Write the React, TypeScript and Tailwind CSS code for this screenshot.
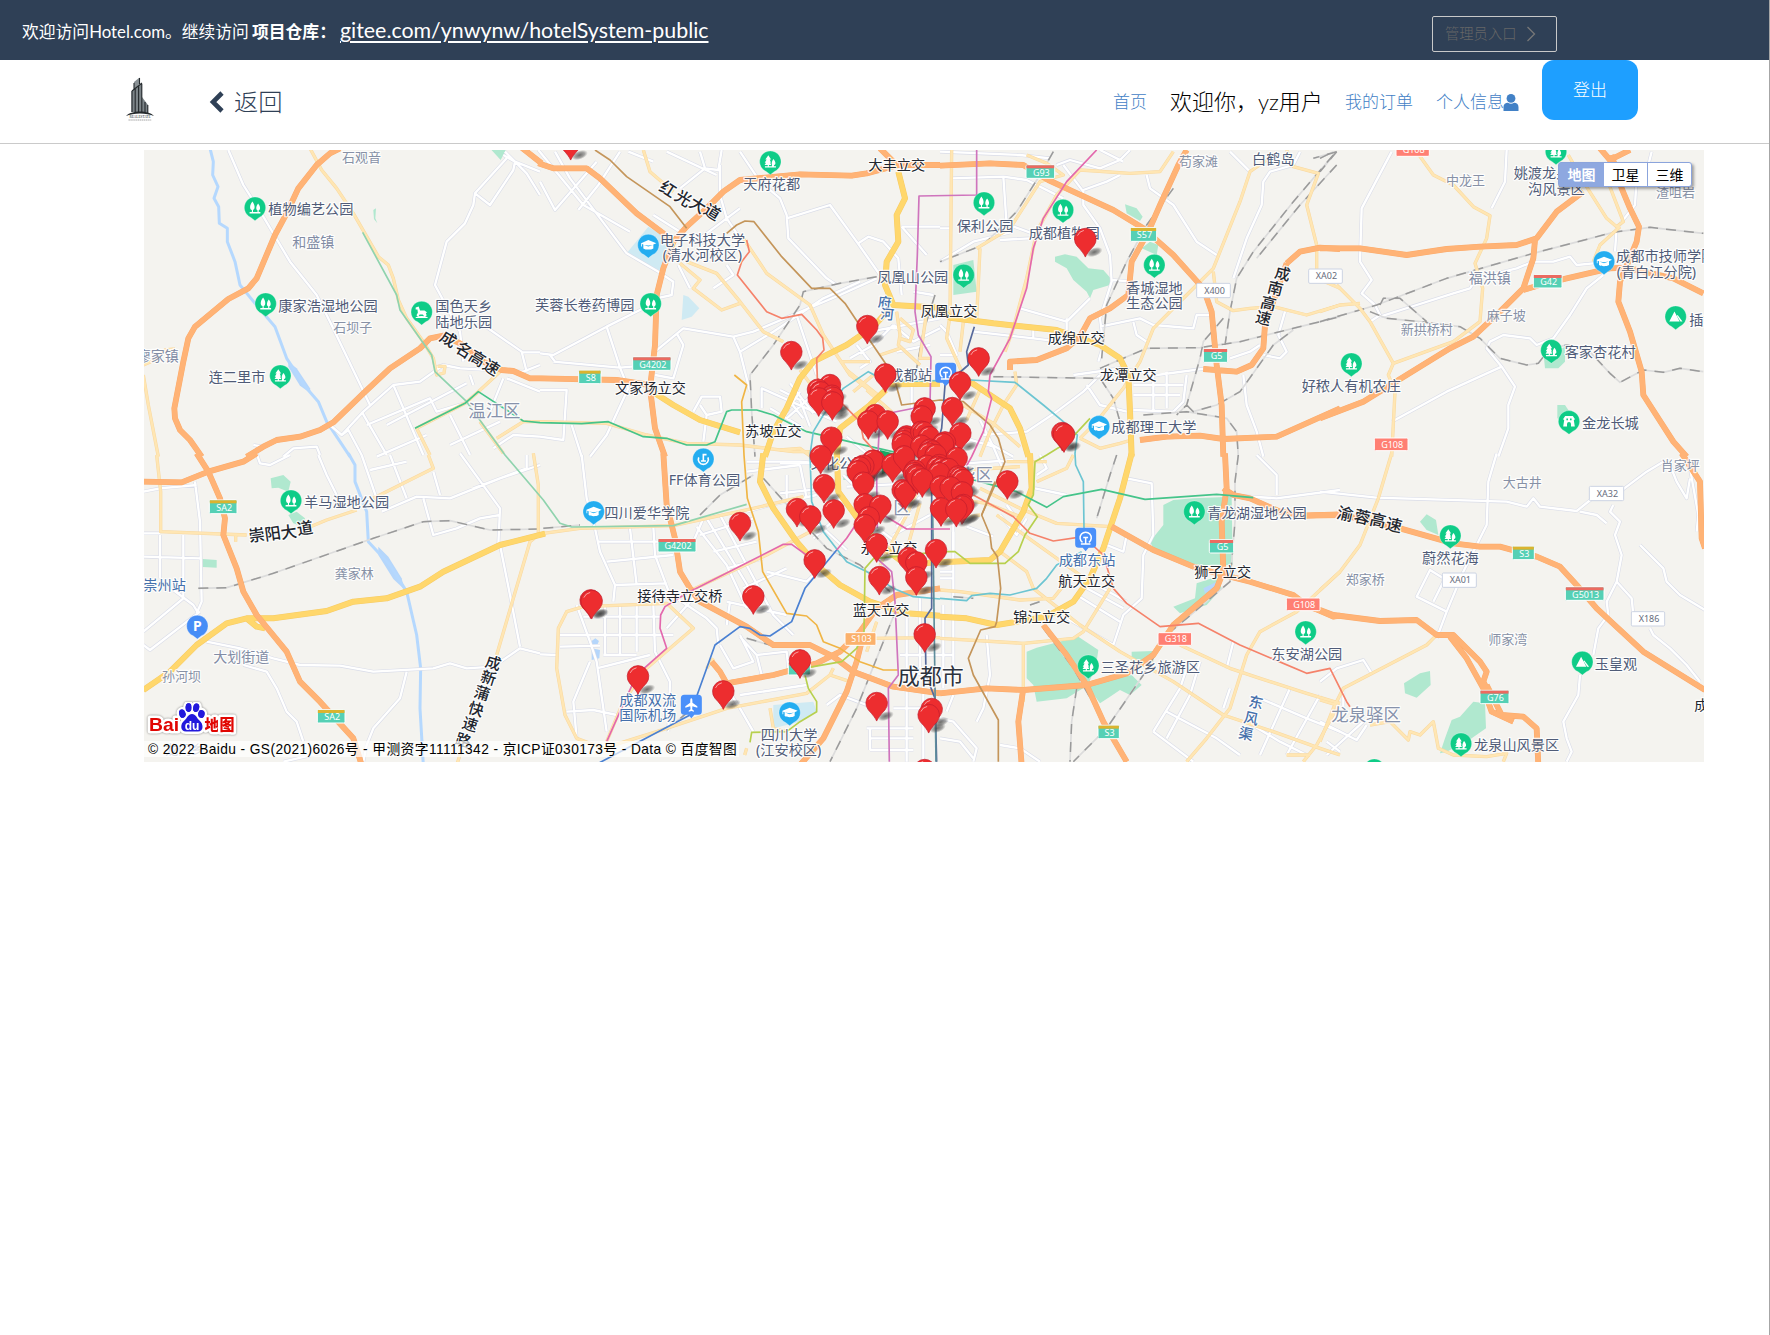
import React from "react";

type TileKey = "A" | "B" | "C" | "D" | "E" | "F" | "G" | "H" | "K";

const TILES: Record<TileKey, [number, number]> = {
  A: [140, 145],
  B: [540, 145],
  C: [940, 145],
  D: [1320, 145],
  E: [140, 455],
  F: [540, 455],
  G: [940, 455],
  H: [1320, 455],
  K: [780, 370],
};

type Paths = Partial<Record<TileKey, string>>;

const park: Paths = {
  A: "M1050 10 L1100 10 L1082 45Z M700 195 L708 190 L706 220 L712 235 L702 222Z",
  C: "M345 335 L375 328 L410 335 L445 370 L490 375 L512 400 L510 420 L460 435 L450 460 L440 440 L400 405 L380 370 L345 350Z M40 360 L100 345 L110 440 L40 450Z M555 178 L590 190 L608 215 L600 228 L560 205Z M605 310 L630 290 L655 300 L650 330Z",
  D: "M672 640 L735 605 L735 650 L715 670 L675 670Z M712 780 L735 780 L755 810 L740 830 L712 820Z",
  E: "M392 70 L430 60 L452 80 L445 110 L415 98 L395 100Z M445 180 L470 170 L495 190 L490 215 L460 205Z M188 312 L230 315 L230 338 L188 336Z",
  G: "M670 150 L700 135 L760 130 L875 125 L878 330 L760 330 L640 280 L630 260 L670 210Z M770 385 L830 365 L845 400 L800 450 L720 475 L700 455 L765 430Z M260 590 L290 578 L415 545 L475 585 L470 620 L445 690 L380 730 L290 740 L280 690 L260 670Z M440 690 L575 660 L605 690 L570 720 L540 705 L510 725 L480 745Z M575 590 L640 588 L640 620 L600 640 L575 620Z",
  H: "M300 200 L320 178 L348 195 L355 240 L320 225Z M252 685 L300 655 L330 648 L332 690 L290 728 L255 715Z M395 795 L420 785 L460 740 L495 745 L498 820 L440 860 L380 890 L360 895 L375 850Z",
  K: "M190 320 L230 300 L240 330 L190 330Z",
};

const water: Paths = {
  B: "M325 245 L400 290 L365 380 L260 325Z M430 450 L445 455 L478 490 L455 515 L425 525Z",
  F: "M700 750 L820 740 L830 770 L780 800 L700 820Z",
};

const lake: Paths = {
  E: "M715 275 L745 305 L785 370 L792 402 L760 372 L715 300Z",
  A: "M445 650 L470 670 L510 730 L512 745 L480 722 L445 665Z",
  F: "M155 558 L166 550 L177 558 L170 574 L155 570Z M155 580 L180 585 L178 610 L155 615Z",
  G: "M790 400 L830 380 L825 400 L795 415Z",
};

const river: Paths = {
  A: "M210 10 L220 50 L218 90 L234 125 L222 160 L236 185 L238 235 L262 250 L262 290 L285 350 L300 420 L345 475 L405 545 L440 640 L500 730 L535 770 L560 830 L630 935",
  E: "M625 -5 L645 30 L645 80 L680 170 L685 260 L750 330 L800 410 L830 540 L842 640 L840 760 L850 930",
};

const white: Paths = {
  A: "M265 15 L310 120 L370 215 L450 350 L530 450 L570 530 L690 780 M1200 80 L1125 50 L1090 30 M1125 50 L1120 75 L1050 180 L1005 145 L1100 40 M1005 145 L1000 180 L975 235 L920 290 L885 420 L960 560 L970 650 M1095 20 L1160 85 L1200 150 M1030 540 L1145 620 L1160 680 M1145 622 L1200 622 M880 670 L910 660 L960 670 L1150 680 L1200 660 M570 840 L605 870 L670 800 L760 720 L840 710 L910 660 M605 870 L625 855 L665 930 M665 800 L740 930 M710 935 L860 870 M760 720 L850 930 M740 840 L980 715 M680 840 L870 760 L890 800 L990 770 M930 810 L990 930 M990 690 L1000 720 M930 900 L1080 830 M1090 700 L1050 800 M1100 700 L1200 740 M430 935 L460 910 L530 905 L540 930 M340 900 L370 905 M1060 910 L1120 870 L1200 875",
  B: "M0 110 L45 195 L170 50 M45 20 L90 100 L260 325 M115 195 L175 120 L240 20 M260 325 L355 380 L400 410 L395 450 L350 460 M265 20 L340 50 M-5 15 L130 180 L270 260 M480 20 L495 70 L535 75 L545 15 M495 70 L420 130 M380 20 L530 90 M540 60 L540 150 L560 220 L600 280 M600 20 L660 110 L720 160 L740 210 L745 280 L860 400 L890 420 M740 220 L870 180 L950 290 L1020 390 M1085 245 L1200 245 M1085 245 L1160 330 M955 295 L985 275 L1030 290 L1075 340 L1085 450 M1120 440 L1180 450 M0 625 L40 630 L200 545 L330 480 M40 650 L240 668 L330 660 M30 630 L45 650 M200 545 L240 668 L265 730 L200 870 L150 935 M345 620 L430 550 L580 575 L640 560 L900 450 L1010 400 M410 565 L430 600 L400 700 L345 690 M580 575 L600 620 L630 740 M600 620 L700 560 L850 460 L960 410 M0 735 L80 735 L70 885 L0 875 M95 840 L125 935 M460 800 L485 755 L540 755 L545 800 L500 810 L480 780 M500 810 L490 890 M665 790 L665 730 L800 790 L890 830 M740 820 L830 740 M770 510 L830 690 M690 790 L790 850 M750 770 L790 820 M780 740 L740 800 M930 640 L1000 600 L1060 540 M950 600 L990 650 L960 670 M520 430 L580 390 L560 360 M415 360 L450 430 M340 210 L420 260 M480 280 L600 190 M1060 540 L1120 590 L1200 550 M1070 620 L1170 600 M990 560 L1200 520",
  C: "M35 100 L190 95 L260 105 L370 160 M190 95 L200 240 M0 250 L30 250 M0 350 L100 290 L220 260 M0 20 L240 30 L330 40 M350 60 L390 45 L480 70 L540 45 L570 15 M480 15 L550 50 M370 60 L430 140 L430 180 L480 250 L510 330 L515 410 L480 520 L490 600 L475 650 M430 135 L500 110 L540 90 M620 90 L630 130 L700 180 L770 290 L830 330 M870 20 L930 80 M1080 20 L1060 60 L990 80 L970 110 L965 180 L920 280 L880 400 M515 405 L580 410 M450 460 L380 530 L240 490 M380 520 L380 560 M100 560 L280 580 L360 590 M280 580 V555 M480 545 L600 520 L640 540 L760 550 L770 510 L820 510 M580 530 L590 570 L620 590 M1035 500 L1015 570 L1040 620 L1020 640 L970 630 M870 640 L930 620 L960 600 M400 690 L540 670 L650 690 L800 670 M640 680 V800 M680 680 V790 M580 720 H730 M580 750 H720 M580 795 L700 800 L730 770 L740 690 M440 720 L480 780 L560 800 M910 690 L920 780 L950 860 L970 935 M480 690 L430 740 L350 800 L260 860 L130 870 M140 890 L220 935 M0 630 L50 630 L20 560 L0 540 M180 230 L290 270 M180 285 L270 280",
  D: "M215 20 L125 190 L120 350 L155 405 L125 445 L165 480 L180 510 L150 530 M180 515 L290 480 L400 445 L450 430 L470 400 L590 370 L640 350 L700 350 L750 335 L770 360 L820 355 M560 15 L555 110 L515 190 M995 20 L985 60 L950 100 L945 180 L890 250 L885 320 M850 390 L800 430 L750 510 L700 580 L650 600 L630 580 L550 570 L510 590 L500 610 L545 665 L585 725 L565 780 L565 850 L535 935 M545 665 L380 740 L215 830",
  E: "M350 -5 L360 25 L390 30 L450 0 M535 0 L560 60 L590 120 M165 80 L180 200 L185 440 L170 475 M10 110 L60 100 L170 90 M10 235 H60 M10 305 L180 310 M60 240 V370 M130 240 V430 L10 530 M180 470 L30 585 L10 570 M100 405 L160 450 L175 475 M200 560 L300 580 L400 610 L480 630 L600 632 L700 650 L880 640 L930 625 L980 640 L1060 635 L1140 580 L1200 595 M310 630 L380 650 L410 700 L440 770 L470 800 L490 860 M800 650 L780 730 L700 820 L680 870 L670 920 M430 920 L560 890 M1080 270 L1110 420 L1140 575 M960 -5 L1080 160 L1075 270 M725 170 L830 125 L930 130 L1080 70 L1200 30 M665 0 L720 160 M750 0 L800 130 M690 45 L800 20 M850 130 L880 240 L950 220 L1020 190 L1080 180 M880 50 L900 120 M1000 100 L1160 40 V0",
  F: "M125 0 L140 130 L165 220 L180 290 L225 390 L220 440 M175 260 L460 260 L490 190 M270 220 L290 390 M340 215 L345 300 L390 420 M200 320 L400 300 M225 390 L380 385 M110 450 L150 560 L170 620 L200 830 M60 540 H400 M60 575 L180 572 M0 598 L50 600 M195 450 V600 M240 450 V600 M290 450 V590 M130 485 H360 M340 450 L345 590 L390 680 L385 830 M190 600 H290 M170 640 L330 600 M80 770 L160 765 L230 780 M410 430 L500 490 L530 520 L535 570 M470 215 L560 330 L620 460 M500 190 L640 420 M540 180 L700 480 L760 540 M480 240 L640 190 M520 290 L650 260 M560 340 L670 310 M610 400 L740 340 M680 350 L800 380 L820 360 M560 440 L740 480 M600 545 L650 600 L665 660 M650 600 L740 590 L745 640 M540 570 L580 640 L640 620 L600 540 M555 690 L600 760 L640 830 M600 720 L800 690 M620 170 L690 150 L830 120 M620 20 L780 20 L900 30 M620 50 L780 30 M570 440 L560 510 M380 520 L460 430 M980 820 L1120 820 M990 850 H1120 M990 885 H1120 M990 820 V885 M1080 660 L1200 655 M1100 700 V920 M1150 680 V920 M1060 760 L1200 760 M860 750 L900 720 L980 750 M910 60 L1000 150 M1060 240 L1170 180 M1100 450 V640 M1140 430 V640 M1080 600 H1200 M150 620 L100 740 L110 850 M740 60 L740 130 M780 30 L800 130 M820 250 L900 180",
  G: "M560 70 L635 85 L640 240 L610 300 L605 430 L550 480 L520 570 M950 0 L1010 60 L1010 120 M1200 105 L1010 130 L860 120 M500 270 L550 290 L560 240 M410 420 L540 500 M440 400 L550 460 M380 490 L520 570 M470 390 L560 440 M40 230 V640 M10 450 V700 M0 350 H40 M0 370 H40 M0 600 H40 M640 830 L720 700 L740 640 M780 620 L750 720 L680 850 M640 830 L760 920 M680 770 L830 850 L900 900 M860 640 L880 560 M870 700 L850 760 M960 730 L1100 790 L1200 830 M1050 700 L960 900 M1140 720 L1040 900 M920 800 L1020 860 L1100 900 M1160 860 L1200 890 M0 790 L40 800 L110 880 L100 920 M0 850 L60 860 L100 910 M40 720 L20 770 M180 870 L240 880 L300 920 M140 540 L150 660 L130 760 L110 800 M300 0 L320 40 L290 60 M180 180 L230 240 L260 190 M200 150 L250 220 M285 100 L380 120",
  H: "M530 -5 L505 80 L500 210 L470 270 L430 350 L380 470 L350 550 M0 110 L170 128 L560 140 L620 155 L640 130 L660 155 L770 168 L830 120 M900 110 L980 50 L1030 20 M780 170 L830 180 L860 205 M880 150 L870 170 L900 200 L885 240 L905 300 L890 380 L860 440 L865 480 L835 520 L820 600 M890 380 L935 430 L940 480 M990 520 L1000 540 L1050 580 L1100 630 L1140 680 M960 270 L1030 340 L1040 380 L1080 420 L1155 465 M780 660 L775 720 L730 800 L740 850 L755 890 L740 920 M370 370 L330 345 L290 425 L380 470 M370 380 L340 440 M1050 30 L1070 80 L1100 130 L1110 70 M1110 40 L1135 180 L1130 230 M0 680 L50 640 L130 615 L155 655 M20 900 L130 800 M0 800 L110 855 L140 810 M70 760 V700",
  K: "M0 280 H100 M0 60 L60 90 L90 170 M30 40 L100 130 M0 370 L180 350 M200 350 L400 340 M395 50 V180 M540 200 L640 230 L670 300 M600 150 L640 230 M560 280 L700 270 M200 200 L260 250 M350 470 L420 380 M520 450 V540 M560 470 L640 500 M300 480 L380 540 M60 410 L200 540 M170 380 L240 440",
};

const local: Paths = {
  A: "M510 10 L545 75 L590 130 L640 205 L715 335 L745 360 L760 400 L775 465 L800 520 L850 590 L880 640 L890 690 L912 684 L915 664 L893 664 M1080 680 L1010 745 L975 775 L830 850 L870 930 M10 690 L25 780 L55 935 M10 660 L45 645 L75 615 L105 612 M1070 880 L1150 830 L1200 830 M1020 830 L1090 925",
  B: "M310 15 L330 80 L400 140 M610 280 L680 385 L810 480 L850 570 L930 690 L1020 760 M440 350 L530 385 L600 470 L670 560 L730 590 M420 355 L480 405 L460 430 L545 495 L600 475 M0 830 L200 835 L320 870 L440 895 L600 900 L760 920 L810 920 M1080 520 L1120 555 L1110 590 L1080 580 M1070 500 L1080 570 L1075 600 L1140 660 M1160 500 L1140 640 L1170 640 M900 650 L990 650 M1020 630 L1080 610 M1000 690 L940 740",
  C: "M35 15 L30 510 L20 580 L70 690 M120 310 L110 520 L70 530 L60 620 M260 30 L320 55 L370 90 L300 110 L210 250 L110 310 M700 20 L660 80 L570 85 L420 75 L350 150 L290 260 L260 400 L220 550 L195 620 M1040 15 L1060 65 L1135 85 L1100 180 L1130 300 L1130 400 L1200 430 M980 45 L930 80 L900 170 L820 370 L740 450 L640 550 L600 650 L550 730 L470 830 L420 880 M820 380 L830 470 L880 497 L930 490 L1000 485 L1100 510 L1200 480 M420 880 L480 910 L540 895 L575 885 M225 680 L230 720 L190 780 L150 860 L120 935",
  D: "M290 20 L340 90 L400 120 L460 185 L510 212 L500 280 L465 355 L488 430 L480 530 L400 590 L220 655 L150 530 L120 490 L50 420 M120 475 L60 480 L0 500 M220 655 L205 690 L225 740 L215 935 M745 30 L790 110 L860 220 L890 245 L910 230 L860 100 M900 245 L840 300 L820 350",
  E: "M50 0 L62 110 L62 230 L320 240 M287 240 V260 M700 130 L880 40 L865 0 M500 220 L560 195 L650 165 M1195 240 L1170 260 L1120 430 L1070 600 M970 870 L950 930 M1180 -5 L1195 90 L1195 240",
  F: "M10 235 L120 220 L400 212 L640 160 L790 125 M455 405 L680 300 L830 220 M130 455 L380 445 L460 520 L320 640 L250 740 M130 455 L80 470 L55 520 L50 640 L75 780 L110 850 L190 880 L350 830 L560 760 L800 715 L870 660 L880 640 M870 660 L930 680 M620 880 L614 900 M690 760 L700 820 L740 830 M1010 500 L980 590 M970 550 L1200 548 M500 640 L520 610 M1170 20 L1100 180 L1020 330 M250 740 L200 860",
  G: "M120 100 L240 160 L350 205 L515 215 M180 290 L260 350 L280 400 L330 440 L420 510 L540 590 L700 680 L850 780 L1000 830 L1140 880 L1200 900 M0 550 L250 565 L400 550 L430 530 L510 400 M250 560 L250 740 M0 405 L60 410 L240 435 L340 430 L380 380 M720 570 L870 640 L960 670 L1100 715 L1200 745 M1200 350 L1070 470 L960 530 L920 600 L870 760 L800 850 L740 920 M1190 760 L1130 870 L1090 920 M1040 900 L1110 900 M400 0 L380 40 L290 80 M200 20 L320 20 M170 180 L280 260 L420 360 M0 200 L120 180",
  H: "M215 -5 L175 130 L120 270 L60 350 L0 405 M345 545 L320 570 L70 700 L40 760 L0 860 M0 735 L50 750 M150 810 L210 800 L265 855 L270 830 L300 840 L340 800 L355 880 L400 900 L500 905 L560 895 L550 920",
  K: "M0 240 L60 235 L120 280 M260 60 L340 130 M540 100 L640 160 L720 230 M600 60 L560 150 M560 300 L720 290 M420 400 L380 540 M60 0 L120 80 M480 380 L620 400 L720 440 M200 0 L300 80",
};

const arterial: Paths = {
  B: "M1075 80 L1095 160 L1070 210 L1075 290 L1040 350 L1035 420 L1060 480 L1200 488 M1050 490 L1000 545 L920 600 L820 650 L780 700 L740 790 L700 860 L675 935 M345 745 L400 780 L480 825 L600 862 M1037 735 L990 780 L900 850 L890 935 M1040 718 L1200 716",
  C: "M0 490 L30 518 L160 535 L350 555 L480 600 L540 640 L565 690 L570 800 L575 935 M60 700 L90 710 L150 750 L210 790 L240 850 L265 935",
  E: "M10 705 L90 650 L170 570 L260 505 L320 490 L400 490 L560 468 L640 440 L740 430 L840 395 L910 350 L1080 270 L1215 236 M320 490 L350 515 L375 520",
  F: "M670 -5 L660 80 L700 160 L770 260 L830 330 L900 390 L990 440 L1100 475 L1200 482 M890 -20 L895 110 L960 200 L1020 270 L1100 330 L1200 320",
  G: "M270 -5 L275 100 L250 170 L180 290 L150 315 L0 322 M575 -5 L540 130 L490 280 L450 370 L400 440 L320 485 L170 510 L80 490 L0 485",
};

const highway: Paths = {
  A: "M600 10 L570 25 L530 60 L475 130 L440 205 L405 270 L350 400 L325 430 L265 462 L165 545 L145 580 L130 650 L103 790 L105 820 L120 855 L150 885 L185 935 M320 935 L370 905 L410 885 L480 875 L540 855 L580 832 L670 745 L750 670 L840 610 L870 580 L910 572 L960 595 L1030 650 L1085 675 L1120 678 L1170 700 L1200 700 M1135 0 L1205 55",
  B: "M-5 55 L40 70 L140 70 L180 100 L290 205 L370 265 L400 300 M1200 60 L1075 60 L980 85 L935 92 L780 88 L600 105 L550 140 L500 190 L440 245 L400 290 L370 370 L350 450 L345 600 L330 730 L345 850 L375 935 M0 700 L230 705 L330 720 M1020 10 L1075 65",
  C: "M0 62 L150 55 L250 60 L325 105 L400 140 L520 195 L610 250 L700 330 L790 430 L815 500 L830 660 L845 780 L850 935 M740 15 L715 60 L660 180 L625 260 L575 350 L565 450 L510 490 L450 520 L420 575 L380 610 L290 645 L210 650 L210 675 M1040 355 L1080 320 L1140 308 L1200 312 M1040 355 L975 540 L970 610 L935 660 L890 680 L790 672 M600 885 L680 875 L780 872 L850 882 L1010 875 L1200 790",
  D: "M0 310 L120 310 L260 330 L380 312 L480 305 L590 300 L650 280 L710 200 L790 140 M645 285 L640 340 L610 430 L540 500 L460 575 L390 610 L300 665 L130 770 L0 820 M610 435 L660 420 L740 400 L870 370 L920 368 L1060 400 L1150 445 M840 10 L870 45 L930 15 M875 30 L905 130 L930 190 L957 245 L950 290 L900 410 L895 470 L930 560 L965 680 L970 750 L1060 890 L1100 935",
  E: "M170 -5 L205 50 L240 130 L255 190 L250 240 L290 340 L310 410 L350 480 L440 590 L480 680 L540 740 L640 850 L665 930 M10 80 L125 82 L205 50 L310 20 L350 -5",
  F: "M370 -5 L380 150 L405 250 L420 350 L450 400 L480 440 L620 515 L700 570 L810 570 L880 605 L940 650 L1060 695 L1200 715 M515 620 L540 650 L560 685 L700 660 L830 625 L900 590 L960 530 L1010 460 L1070 420 L1200 400 M970 540 L950 620 L920 710 L850 850 L780 930",
  G: "M0 715 L140 700 L250 705 L440 690 L560 655 L640 600 L700 510 L830 400 L850 350 L845 200 L860 100 L855 -5 M850 100 L880 120 L930 130 L1020 170 L1100 182 L1200 180 M515 215 L640 285 L760 335 L850 360 L930 380 L1060 420 L1100 450 L1180 485 L1200 482 M310 510 L380 600 L440 690 L490 800 L560 920 M250 700 L235 800 L245 930",
  H: "M-60 182 L60 178 L240 220 L400 265 L480 275 L540 275 L650 305 L720 335 L770 390 L830 460 L970 590 L1155 705 M-100 440 L0 465 L40 480 L180 498 L290 495 L350 540 L400 540 L480 620 L500 650 L490 680 L510 720 M390 545 L440 610 L490 700 L515 770 L580 800 M500 690 L545 780 L610 785 L650 820 L655 930 M1085 -5 L1140 80 L1145 250 L1155 280",
};

const rail: Paths = {
  B: "M1010 395 L900 415 L790 440 L780 480 L700 600 L630 690 L635 800 L645 935 M1185 450 L1150 560 L1130 670",
  C: "M340 20 L300 90 L230 200 L130 300 L0 350 M1190 20 L1120 40 M1180 30 L1060 170 L940 320 L890 400 L870 500 L855 600 M1190 60 L1080 180 L950 340 M700 130 L620 240 L560 350 L500 480 L485 640 M160 695 L480 700 L520 760 L540 830 M480 670 L620 610 L780 608 L900 590 L1060 550 L1200 515 M850 520 L790 590 L780 640 L740 780 L710 810 M610 810 L740 800 L860 820 L890 860 L895 935 M740 780 L760 800 L830 780 L900 740 L1000 600 L1060 555",
  D: "M0 530 L170 480 L380 400 L640 325 L880 262 L990 247 L1150 265 M180 480 L190 460 L240 460 L320 530 M150 500 L200 520 L300 530 L420 545 L480 580 L540 640 L620 660 L655 655 L690 610 L740 600 L800 610 L870 685 L900 712 L970 675 L1030 682 L1080 670 L1150 680 M50 20 L0 80 M0 40 L40 20",
  E: "M175 400 L260 398 L400 355 L700 250 L850 200 L930 197 L1050 225 L1200 222",
  F: "M10 220 L120 210 M480 180 L540 120 L640 60 M670 70 L760 170 L860 280 L960 330 L1050 410 M620 550 L690 570 M380 825 L480 740 M1070 460 L1030 560 L950 760 L870 920",
  G: "M530 0 L510 60 L470 190 M895 0 L885 80 L885 200 L870 380 L740 490 L680 540 L610 660 L500 820 L400 920 M270 450 L300 440 M310 520 L400 640 L480 780 M410 700 L395 800 L390 920 M40 425 L100 430",
};

const metro: [string, TileKey, string][] = [
  ["#8fd3ae", "A", "M668 262 L770 450 L780 495 L875 630 L885 680 L980 770 L1095 930 L1210 1065 L1260 1135 L1295 1146 L1600 1142 L1820 1078"],
  ["#45c48a", "A", "M825 850 L975 775 L1015 740 L1150 828 L1200 833 L1325 836 L1405 830 L1510 875 L1580 880 L1640 900 L1700 900 L1725 890 L1760 800 L1775 795 L1850 795 L1900 810 L2000 860 L2150 895 L2280 925"],
  ["#c4955a", "B", "M165 15 L210 45 L260 95 L390 185 L440 250 M560 265 L590 240 L615 228 L642 230 L725 335 L815 430 L870 430 L915 475 L985 580 L1060 690 L1085 780 L1200 765 L1270 770 L1350 840 L1375 880 L1395 950 L1365 1020 L1325 1110"],
  ["#f5826a", "B", "M620 285 L628 320 L605 350 L592 390 L680 500 L725 520 L785 508 L830 555 L848 580 L852 615 L830 640 L832 700 L960 830 L970 880 L1010 925"],
  ["#cf74bd", "B", "M1310 15 L1310 150 L1137 153 L1132 330 L1125 500 L1135 570 L1173 635 L1170 780 L1020 810 L1010 1000 L1012 1150"],
  ["#f0b545", "B", "M583 690 L620 720 L605 770 L612 930 L622 1060 L655 1160 L668 1280 L740 1405 L800 1413 L830 1440 L850 1490 L900 1510 L960 1550 L1030 1575 L1075 1575"],
  ["#6cc5d2", "B", "M1290 705 L1040 710 L985 680 L910 730 L850 810 L820 860 L810 930 L815 1070 L850 1160 L920 1250 L1000 1290 L1060 1330 L1120 1355 L1200 1362"],
  ["#6cc5d2", "C", "M90 705 L225 712 L310 780 L370 830 L412 870 L405 925 L407 960 L430 1010 L432 1150 M425 1220 L350 1260 L320 1300 L290 1330 L210 1350 L150 1345 L95 1352 L80 1367 L0 1360"],
  ["#e368ad", "C", "M470 15 L380 110 L310 220 L280 310 L260 430 L210 580 L150 690 L145 740 L155 760 L130 860 L95 935 L70 980"],
  ["#b7d04e", "C", "M450 820 L385 890 L320 930 L285 950 L280 1050 L265 1080 L292 1115 L255 1170 L235 1220 L195 1255 L90 1255 L45 1220 L0 1220 L-190 1240"],
  ["#56699b", "C", "M103 545 L80 620 L85 660 L15 720 L5 850 L-25 950 L-25 1390 L-45 1420 L-42 1590 L-15 1660 L-10 1850"],
  ["#5e8d9c", "C", "M-22 1100 L-12 1850"],
  ["#e368ad", "F", "M200 860 L240 770 L290 660 L380 580 L360 520 L362 480 L375 455 L440 415 L730 268 L755 268 L820 315 M890 285 L920 250 L960 190 M1030 180 L1100 222 L1230 222"],
  ["#cf74bd", "F", "M1010 310 L1055 350 L1065 440 L1075 660 L1045 700 L1048 920"],
  ["#4a80d2", "F", "M175 925 L450 780 L525 570 L600 515 L630 520 L660 540 L690 543 L755 500 L795 400 L890 285"],
  ["#b7d04e", "F", "M1010 300 L975 340 L972 530 L950 580 L905 620 L790 640 L805 700 L830 740 L830 770 L780 800 L740 830 L635 832 L630 862"],
  ["#45c48a", "G", "M-80 25 L230 110 L320 157 L370 125 L485 103 L615 133 L830 118 L940 128"],
  ["#f5826a", "G", "M100 120 L220 185 L270 235 L340 258 L430 245 L490 300 L520 400 L560 445 L660 515 L775 505 L900 570 L1100 655 L1170 640 L1220 740 L1230 755"],
  ["#c4955a", "G", "M165 80 L125 180 L150 240 L155 280 L172 305 L182 400 L170 500 L165 515 L122 525 L85 610 L100 660 L175 795 L175 920"],
];

// kind: p = point of interest, k = junction, g = village, t = township,
// d = district, c = city, b = transit or water
type LabelKind = "p" | "k" | "g" | "t" | "d" | "c" | "b";
const LABEL: Record<LabelKind, [number, string]> = {
  p: [14.2, "#505c78"],
  k: [14.2, "#22262f"],
  g: [13, "#8791a6"],
  t: [14, "#828ca5"],
  d: [17.4, "#8792ab"],
  c: [22, "#2c323d"],
  b: [14.2, "#4570ab"],
};

const labels: [TileKey, number, number, string, LabelKind][] = [
  ["A", 606, 38, "石观音", "g"], ["A", 385, 192, "植物编艺公园", "p"], ["A", 457, 292, "和盛镇", "t"],
  ["A", 415, 482, "康家浩湿地公园", "p"], ["A", 886, 484, "国色天乡", "p"], ["A", 886, 530, "陆地乐园", "p"],
  ["A", 580, 547, "石坝子", "g"], ["A", -10, 632, "廖家镇", "t"], ["A", 206, 697, "连二里市", "p"],
  ["A", 985, 798, "温江区", "d"],
  ["B", 610, 118, "天府花都", "p"], ["B", 985, 60, "大丰立交", "k"], ["B", 360, 284, "电子科技大学", "p"],
  ["B", 368, 330, "(清水河校区)", "p"], ["B", 1012, 396, "凤凰山公园", "p"], ["B", -15, 480, "芙蓉长卷药博园", "p"],
  ["B", 1142, 497, "凤凰立交", "k"], ["B", 1048, 689, "成都站", "p"], ["B", 225, 728, "文家场立交", "k"],
  ["B", 615, 859, "苏坡立交", "k"],
  ["C", 717, 49, "苟家滩", "g"], ["C", 936, 42, "白鹤岛", "p"], ["C", 50, 242, "保利公园", "p"],
  ["C", 266, 263, "成都植物园", "p"], ["C", 558, 428, "香城湿地", "p"], ["C", 558, 474, "生态公园", "p"],
  ["C", 323, 579, "成绵立交", "k"], ["C", 480, 691, "龙潭立交", "k"], ["C", 1085, 722, "好秾人有机农庄", "p"],
  ["C", 514, 847, "成都理工大学", "p"],
  ["D", 378, 107, "中龙王", "g"], ["D", 581, 85, "姚渡龙泉", "p"], ["D", 624, 132, "沟风景区", "p"],
  ["D", 1008, 143, "渣咀岩", "g"], ["D", 888, 332, "成都市技师学院", "p"], ["D", 890, 380, "(青白江分院)", "p"],
  ["D", 446, 400, "福洪镇", "t"], ["D", 500, 512, "麻子坡", "g"], ["D", 242, 553, "新拱桥村", "g"],
  ["D", 1108, 524, "插旗山", "p"], ["D", 734, 622, "客家杏花村", "p"], ["D", 786, 835, "金龙长城", "p"],
  ["E", 492, 141, "羊马湿地公园", "p"], ["E", 584, 355, "龚家林", "g"], ["E", 10, 390, "崇州站", "b"],
  ["E", 220, 605, "大划街道", "t"], ["E", 66, 664, "孙河坝", "g"], ["E", 76, 884, "龙门乡", "g"],
  ["F", 386, 76, "FF体育公园", "p"], ["F", 193, 175, "四川爱华学院", "p"], ["F", 292, 424, "接待寺立交桥", "k"],
  ["F", 812, 24, "文化公园", "p"], ["F", 962, 278, "永丰立交", "k"], ["F", 938, 464, "蓝天立交", "k"],
  ["F", 238, 734, "成都双流", "b"], ["F", 238, 779, "国际机场", "b"], ["F", 662, 839, "四川大学", "p"],
  ["F", 648, 886, "(江安校区)", "p"], ["F", 1073, 662, "成都市", "c"],
  ["G", 2, 60, "成华区", "d"], ["K", 340, 412, "区", "d"],
  ["G", 802, 174, "青龙湖湿地公园", "p"], ["G", 356, 314, "成都东站", "b"], ["G", 355, 379, "航天立交", "k"],
  ["G", 763, 352, "狮子立交", "k"], ["G", 220, 486, "锦江立交", "k"], ["G", 482, 635, "三圣花乡旅游区", "p"],
  ["G", 994, 596, "东安湖公园", "p"],
  ["H", 1022, 31, "肖家坪", "g"], ["H", 548, 82, "大古井", "g"], ["H", 306, 308, "蔚然花海", "p"],
  ["H", 77, 372, "郑家桥", "g"], ["H", 505, 554, "师家湾", "g"], ["H", 824, 627, "玉皇观", "p"],
  ["H", 1123, 750, "成洛大道", "k"], ["H", 34, 779, "龙泉驿区", "d"], ["H", 462, 869, "龙泉山风景区", "p"],
];

// Characters set one by one along a road: tile, angle, colour, [char, x, y]...
const curved: [TileKey, number, string, number, [string, number, number][]][] = [
  ["A", 32, "#22262e", 16, [["成", 925, 582], ["名", 972, 615], ["高", 1012, 640], ["速", 1054, 667]]],
  ["B", 32, "#22262e", 16, [["红", 384, 132], ["光", 430, 160], ["大", 474, 180], ["道", 517, 201]]],
  ["C", 14, "#22262e", 15.5, [["成", 1028, 386], ["南", 1006, 430], ["高", 985, 475], ["速", 970, 519]]],
  ["E", -8, "#22262e", 16.2, [["崇", 350, 240], ["阳", 398, 235], ["大", 446, 231], ["道", 495, 219]]],
  ["E", 17, "#22262e", 15.5, [["成", 1060, 623], ["新", 1046, 668], ["蒲", 1026, 714], ["快", 1008, 762], ["速", 990, 808], ["路", 970, 856]]],
  ["H", 13, "#22262e", 16.2, [["渝", 76, 176], ["蓉", 127, 186], ["高", 174, 196], ["速", 222, 210]]],
  ["G", 12, "#4570ab", 14.5, [["东", 948, 742], ["风", 934, 790], ["渠", 918, 836]]],
  ["B", 6, "#4570ab", 13.5, [["府", 1034, 472], ["河", 1042, 508]]],
];

type PinIcon = "tree" | "pine" | "cap" | "mount" | "gate" | "horse" | "P" | "sport";
const pins: [TileKey, number, number, string, PinIcon][] = [
  ["A", 345, 188, "#0fcc87", "tree"], ["A", 377, 476, "#0fcc87", "tree"], ["A", 845, 501, "#0fcc87", "horse"],
  ["A", 421, 692, "#0fcc87", "pine"], ["B", 691, 50, "#0fcc87", "pine"], ["B", 325, 300, "#24adf0", "cap"],
  ["B", 332, 476, "#0fcc87", "tree"], ["C", 132, 173, "#0fcc87", "tree"], ["C", 369, 195, "#0fcc87", "tree"],
  ["C", 71, 390, "#0fcc87", "tree"], ["C", 643, 360, "#0fcc87", "tree"], ["C", 477, 844, "#24adf0", "cap"],
  ["D", 708, 20, "#0fcc87", "pine"], ["D", 852, 350, "#24adf0", "cap"], ["D", 1067, 515, "#0fcc87", "mount"],
  ["D", 694, 616, "#0fcc87", "pine"], ["D", 94, 656, "#0fcc87", "pine"], ["D", 747, 829, "#0fcc87", "gate"],
  ["E", 453, 137, "#0fcc87", "tree"], ["E", 172, 513, "#468df6", "P"], ["F", 490, 12, "#24adf0", "sport"],
  ["F", 161, 170, "#24adf0", "cap"], ["F", 749, 773, "#24adf0", "cap"], ["G", 763, 170, "#0fcc87", "tree"],
  ["G", 445, 632, "#0fcc87", "pine"], ["G", 1097, 530, "#0fcc87", "tree"], ["H", 391, 242, "#0fcc87", "pine"],
  ["H", 787, 621, "#0fcc87", "mount"], ["H", 423, 866, "#0fcc87", "pine"], ["H", 163, 944, "#0fcc87", "tree"],
];

const stations: [TileKey, number, number, "rail" | "air"][] = [
  ["B", 1217, 685, "rail"], ["G", 437, 250, "rail"], ["F", 454, 751, "air"],
];

type BadgeKind = "g" | "s" | "n" | "o" | "x";
const badges: [TileKey, number, number, number, number, string, BadgeKind][] = [
  ["B", 278, 636, 115, 40, "G4202", "g"], ["B", 116, 676, 67, 40, "S8", "s"], ["C", 258, 60, 86, 40, "G93", "g"],
  ["C", 571, 248, 79, 41, "S57", "s"], ["C", 770, 415, 101, 43, "X400", "x"], ["C", 1106, 372, 101, 43, "XA02", "x"],
  ["C", 790, 611, 73, 41, "G5", "g"], ["D", 228, -4, 100, 38, "G108", "n"], ["D", 640, 389, 86, 40, "G42", "g"],
  ["D", 163, 879, 101, 38, "G108", "n"], ["E", 208, 135, 83, 41, "SA2", "s"], ["E", 532, 764, 83, 40, "SA2", "s"],
  ["F", 354, 251, 114, 40, "G4202", "g"], ["F", 915, 533, 93, 38, "S103", "o"], ["F", 745, 622, 66, 38, "S3", "g"],
  ["G", 808, 254, 73, 40, "G5", "g"], ["G", 1039, 429, 101, 38, "G108", "n"], ["G", 654, 533, 101, 38, "G318", "n"],
  ["G", 474, 811, 64, 40, "S3", "s"], ["H", 808, 94, 103, 43, "XA32", "x"], ["H", 577, 274, 66, 40, "S3", "s"],
  ["H", 367, 354, 102, 43, "XA01", "x"], ["H", 736, 396, 116, 40, "G5013", "g"], ["H", 934, 470, 100, 43, "X186", "x"],
  ["H", 480, 706, 87, 40, "G76", "g"],
];

const markers: [TileKey, number, number][] = [
  ["B", 92, 44], ["B", 754, 674], ["B", 982, 596], ["C", 436, 335], ["C", 367, 917], ["C", 372, 921],
  ["K", 150, 98], ["K", 114, 112], ["K", 122, 120], ["K", 156, 130], ["K", 158, 136], ["K", 116, 138], ["K", 157, 150],
  ["K", 316, 66], ["K", 540, 90], ["K", 596, 18], ["K", 286, 188], ["K", 265, 207], ["K", 323, 207],
  ["K", 434, 168], ["K", 425, 192], ["K", 517, 167], ["K", 154, 256], ["K", 122, 311], ["K", 541, 243],
  ["K", 132, 398], ["K", 51, 470], ["K", 91, 492], ["K", 161, 474], ["K", 682, 387], ["K", 283, 325], ["K", 278, 325],
  ["K", 250, 340], ["K", 240, 345], ["K", 233, 357], ["K", 250, 391], ["K", 338, 336], ["K", 254, 456], ["K", 301, 460],
  ["K", 266, 495], ["K", 254, 518], ["K", 290, 576], ["K", 368, 413], ["K", 376, 417],
  ["K", 380, 252], ["K", 375, 258], ["K", 370, 266], ["K", 368, 276], ["K", 424, 238], ["K", 432, 240], ["K", 447, 254],
  ["K", 424, 280], ["K", 372, 312], ["K", 495, 270], ["K", 489, 275], ["K", 450, 292], ["K", 456, 297], ["K", 445, 303],
  ["K", 467, 308], ["K", 530, 317], ["K", 440, 340], ["K", 478, 338], ["K", 472, 344], ["K", 485, 348], ["K", 505, 350],
  ["K", 477, 362], ["K", 405, 355], ["K", 402, 362], ["K", 408, 368], ["K", 412, 372], ["K", 427, 381], ["K", 535, 372],
  ["K", 541, 376], ["K", 548, 383], ["K", 482, 402], ["K", 512, 405], ["K", 546, 420], ["K", 550, 458], ["K", 546, 462],
  ["K", 483, 468], ["K", 529, 470], ["F", 600, 257], ["F", 640, 477], ["F", 824, 369], ["F", 152, 489], ["F", 155, 491],
  ["F", 294, 717], ["F", 780, 669], ["F", 550, 762], ["F", 1018, 419], ["F", 1106, 362], ["F", 1129, 375], ["F", 1129, 420],
  ["F", 1188, 338], ["F", 1154, 591], ["F", 1175, 815], ["F", 1166, 833], ["F", 1010, 797], ["F", 1154, 998],
];

const toMap = (t: TileKey, x: number, y: number): [number, number] => [
  TILES[t][0] + x / 3,
  TILES[t][1] + y / 3,
];

function Layer({ paths, width, stroke = "none", fill = "none", dash }: {
  paths: Paths; width?: number; stroke?: string; fill?: string; dash?: string;
}) {
  return (
    <g fill={fill} stroke={stroke} strokeWidth={width} strokeDasharray={dash} strokeLinejoin="round">
      {(Object.keys(paths) as TileKey[]).map((k) => (
        <path key={k} d={paths[k]} transform={`translate(${TILES[k][0]} ${TILES[k][1]}) scale(0.33333)`} />
      ))}
    </g>
  );
}

function Pin({ x, y, color, icon }: { x: number; y: number; color: string; icon: PinIcon }) {
  return (
    <g transform={`translate(${x} ${y})`}>
      <path d="M0 13 L-4.2 9.8 A10.7 10.7 0 1 1 4.2 9.8Z" fill={color} stroke="#fff" strokeOpacity=".5" strokeWidth=".6" />
      <g fill="#fff">
        {icon === "tree" && (
          <path d="M-2.6 -6.2 C-5.6 -2.5 -5.6 1.8 -3.1 2.3 V4.4 H-5.4 V5.8 H5.4 V4.4 H3.7 V2.6 C5.8 2 5.4 -1.6 3.1 -4.2 C1 -1.6 .6 2 2.5 2.6 V4.4 H-2 V2.3 C.2 1.8 .3 -2.6 -2.6 -6.2Z" />
        )}
        {icon === "pine" && (
          <path d="M-2 -6.5 L-5 -2.2 H-3.7 L-5.6 1 H-4.2 L-5.8 3.4 H-2.6 V4.6 H-5.4 V5.8 H5.6 V4.6 H3.6 V3.6 C6.2 3 5 -.6 3 -2.6 C2 -1.4 .9 1.4 1.6 2.9 V4.6 H-1.4 V3.4 H1 L-.2 1 L.6 .8 L-.6 -2.2 H.8Z" />
        )}
        {icon === "cap" && (
          <path d="M0 -5 L8 -1.8 L5 -.4 V3.4 C2.5 5 -2.5 5 -5 3.4 V-.4 L-6.4 -1 V1.6 H-7.2 V-1.8Z M-4.6 -.1 L0 1.6 L4.6 -.1 L0 .6Z" />
        )}
        {icon === "mount" && <path d="M-6.4 4.8 L-1.2 -5.2 L4 4.8Z M2 -1.6 L6.8 4.8 H4.8 L1.2 -1Z" />}
        {icon === "gate" && (
          <path fillRule="evenodd" d="M-6 -2 L-3.8 -5.4 H3.8 L6 -2 L4.8 -1.4 L5.8 5.2 H2 V2.6 A2 2 0 0 0 -2 2.6 V5.2 H-5.8 L-4.8 -1.4Z M-2.6 -2.8 V-1 H-1 V-2.8Z M1 -2.8 V-1 H2.6 V-2.8Z" />
        )}
        {icon === "horse" && (
          <path d="M-6 -4.4 L-3 -5.6 L-1.6 -1.6 H2.8 L5.6 .6 L4.2 1 L5 3.6 L3 4.8 L1 2.4 L-2 2.4 L-3.6 4.8 L-5.2 3.2 L-3.8 .8 L-4.2 -2.4 L-6 -2.6Z M-6 5.2 C-2 3.6 2 3.6 6 5.2 V6 H-6Z" />
        )}
      </g>
      {icon === "sport" && (
        <g fill="none" stroke="#fff" strokeWidth="1.6">
          <path d="M-4.6 -1.6 A5 5 0 1 0 4.6 -1.6 M-2.4 2 H2.6 M0 2 V-4.4 H3.2" />
        </g>
      )}
      {icon === "P" && (
        <text textAnchor="middle" y="5" fontSize="14" fontWeight="700" fill="#fff">P</text>
      )}
    </g>
  );
}

function Station({ x, y, kind }: { x: number; y: number; kind: "rail" | "air" }) {
  return (
    <g transform={`translate(${x} ${y})`}>
      <path d="M-7 -10.5 H7 A3.5 3.5 0 0 1 10.5 -7 V6 A3.5 3.5 0 0 1 7 9.5 H3 L0 13 L-3 9.5 H-7 A3.5 3.5 0 0 1 -10.5 6 V-7 A3.5 3.5 0 0 1 -7 -10.5Z" fill="#4a90fa" />
      {kind === "rail" ? (
        <g fill="none" stroke="#fff" strokeWidth="1.5">
          <path d="M-3.2 4 A5.6 5.6 0 1 1 3.2 4 M-2.4 -.8 H2.4 M0 -.8 V5.4 M-4.8 5.6 H4.8" />
        </g>
      ) : (
        <path fill="#fff" d="M0 -7 C1 -7 1.1 -5.6 1.1 -2.6 L6 1 V2.4 L1.1 .9 L.8 4 L2.6 5.4 V6.4 L0 5.7 L-2.6 6.4 V5.4 L-.8 4 L-1.1 .9 L-6 2.4 V1 L-1.1 -2.6 C-1.1 -5.6 -1 -7 0 -7Z" />
      )}
    </g>
  );
}

function Badge({ x, y, w, h, text, kind }: { x: number; y: number; w: number; h: number; text: string; kind: BadgeKind }) {
  const body = kind === "n" ? "#ff7f73" : kind === "o" ? "#fbb16c" : kind === "x" ? "#fff" : "#55d0b5";
  const top = kind === "g" ? "#ec6a60" : kind === "s" ? "#dbb32f" : null;
  return (
    <g transform={`translate(${x} ${y})`}>
      <rect width={w} height={h} rx="1.2" fill={body} stroke={kind === "x" ? "#ccd3e3" : "#fff"} strokeWidth="1" />
      {top && <rect x=".5" y=".3" width={w - 1} height="3" fill={top} />}
      <text x={w / 2 + 1} y={top ? h / 2 + 4 : h / 2 + 3.2} textAnchor="middle" fontSize="9" fill={kind === "x" ? "#666c7c" : "#fff"}>
        {text}
      </text>
    </g>
  );
}

function Marker({ x, y }: { x: number; y: number }) {
  return (
    <g transform={`translate(${x} ${y + 0.4})`}>
      <ellipse cx="9" cy="-5" rx="8.6" ry="4.4" transform="rotate(-20 9 -5)" fill="url(#shade)" />
      <path d="M0 0 Q-1.6 -4 -8.4 -11.2 A10.8 10.8 0 1 1 8.4 -11.2 Q1.6 -4 0 0Z" fill="#ed2d2f" stroke="#c11c2c" strokeWidth=".7" />
      <path d="M-7.8 -21.5 A8.4 8.4 0 0 1 -1.5 -26.6" fill="none" stroke="#fff" strokeOpacity=".55" strokeWidth="1" />
    </g>
  );
}

function MapCanvas() {
  return (
    <svg viewBox="144 150 1560 612" className="block h-[612px] w-[1560px] font-['Noto_Sans','Noto_Sans_CJK_SC',sans-serif]">
      <defs>
        <radialGradient id="shade">
          <stop offset="0" stopColor="#333" stopOpacity=".7" />
          <stop offset=".6" stopColor="#444" stopOpacity=".45" />
          <stop offset="1" stopColor="#555" stopOpacity="0" />
        </radialGradient>
      </defs>
      <rect x="144" y="150" width="1560" height="612" fill="#f4f3ef" />
      <Layer paths={park} fill="#b0e8cf" />
      <Layer paths={water} fill="#cfeaf3" />
      <Layer paths={lake} fill="#b5d6fb" />
      <Layer paths={river} stroke="#b5d8fe" width={9} />
      <Layer paths={white} stroke="#d9dce8" width={10.5} />
      <Layer paths={white} stroke="#ffffff" width={7} />
      <Layer paths={rail} stroke="#dcdcdc" width={5} />
      <Layer paths={rail} stroke="#9a9a9a" width={4.5} dash="30 24" />
      <Layer paths={local} stroke="#f8d8a0" width={10} />
      <Layer paths={local} stroke="#ffe6b3" width={7} />
      <Layer paths={arterial} stroke="#f6cb66" width={18} />
      <Layer paths={arterial} stroke="#ffd76c" width={15} />
      <Layer paths={highway} stroke="#fbaa6a" width={17.5} />
      <Layer paths={highway} stroke="#ffb376" width={15} />
      {metro.map(([c, t, d], i) => (
        <path key={i} d={d} fill="none" stroke={c} strokeWidth={5} strokeLinejoin="round" transform={`translate(${TILES[t][0]} ${TILES[t][1]}) scale(0.33333)`} />
      ))}
      <path d="M880 450 L900 455 V468 L882 474Z" fill="#16a862" />
      {badges.map(([t, x, y, w, h, s, k], i) => {
        const [px, py] = toMap(t, x, y);
        return <Badge key={i} x={px} y={py} w={w / 3} h={h / 3} text={s} kind={k} />;
      })}
      <g stroke="#fff" strokeOpacity=".85" strokeWidth="2.4" strokeLinejoin="round" paintOrder="stroke">
        {labels.map(([t, x, y, s, k], i) => {
          const [px, py] = toMap(t, x, y);
          return (
            <text key={i} x={px} y={py + LABEL[k][0] * 0.36} fontSize={LABEL[k][0]} fill={LABEL[k][1]}>{s}</text>
          );
        })}
        {curved.map(([t, a, c, size, chars], i) => (
          <g key={i} fill={c} fontSize={size} fontWeight="500" textAnchor="middle">
            {chars.map(([ch, x, y], j) => {
              const [px, py] = toMap(t, x, y);
              return <text key={j} transform={`translate(${px} ${py}) rotate(${a})`} y={size * 0.37}>{ch}</text>;
            })}
          </g>
        ))}
      </g>
      {pins.map(([t, x, y, c, icon], i) => {
        const [px, py] = toMap(t, x, y);
        return <Pin key={i} x={px} y={py} color={c} icon={icon} />;
      })}
      {stations.map(([t, x, y, k], i) => {
        const [px, py] = toMap(t, x, y);
        return <Station key={i} x={px} y={py} kind={k} />;
      })}
      {markers.map(([t, x, y], i) => {
        const [px, py] = toMap(t, x, y);
        return <Marker key={i} x={px} y={py} />;
      })}
    </svg>
  );
}

function BaiduLogo() {
  return (
    <svg viewBox="0 0 94 34" className="block h-[34px] w-[94px] [filter:drop-shadow(0_0_1px_rgba(0,0,0,.45))]">
      <g stroke="#fff" strokeWidth="5" strokeLinejoin="round" paintOrder="stroke" fontWeight="700">
        <text x="4" y="28.6" fontSize="19" textLength="30" lengthAdjust="spacingAndGlyphs" fill="#e10602" className="font-['Liberation_Sans',sans-serif]">Bai</text>
        <text x="59.5" y="27.6" fontSize="15" fontWeight="900" textLength="30" fill="#e10602" className="font-['Noto_Sans_CJK_SC',sans-serif]">地图</text>
        <g fill="#2319dc">
          <ellipse cx="37.4" cy="11.6" rx="3.2" ry="4.2" transform="rotate(-15 37.4 11.6)" />
          <ellipse cx="43.6" cy="5.6" rx="3" ry="4.3" />
          <ellipse cx="51.2" cy="5.8" rx="3" ry="4.3" transform="rotate(10 51.2 5.8)" />
          <ellipse cx="56.4" cy="12" rx="3.2" ry="3.9" transform="rotate(10 56.4 12)" />
          <path d="M47 12 C51 12 51.5 16 54.5 18.4 C58.6 21.6 59 29.4 53 29.6 H41 C35 29.4 35 21.6 39.4 18.4 C42.4 16 43 12 47 12Z" />
        </g>
      </g>
      <g fill="#2319dc">
        <ellipse cx="37.4" cy="11.6" rx="3.2" ry="4.2" transform="rotate(-15 37.4 11.6)" />
        <ellipse cx="43.6" cy="5.6" rx="3" ry="4.3" />
        <ellipse cx="51.2" cy="5.8" rx="3" ry="4.3" transform="rotate(10 51.2 5.8)" />
        <ellipse cx="56.4" cy="12" rx="3.2" ry="3.9" transform="rotate(10 56.4 12)" />
      </g>
      <text x="47" y="27.6" textAnchor="middle" fontSize="12" fontWeight="700" fill="#fff" className="font-['Liberation_Sans',sans-serif]">du</text>
    </svg>
  );
}

function TowerLogo() {
  return (
    <svg viewBox="0 0 30 44" className="block h-[44px] w-[30px]">
      <path d="M9 5 L14.5 0.5 V7 L9 13Z" fill="#8a9195" />
      <path d="M6.5 14 L17 6 V20 L23 28 V36 L6.5 35Z" fill="#7c8488" />
      <path d="M9 6 V12 M14.5 1 V7 M7 14 L17 6 M7 14 V35 M10.2 12 V35 M13.6 9.5 V35 M16.8 7 V35 M20 25 V35 M22.8 28 V36" stroke="#24292c" strokeWidth="1.1" fill="none" />
      <path d="M1 39 C6 33 24 33 29 39 C22 35.6 8 35.6 1 39Z" fill="#24292c" />
      <text x="15" y="41.4" textAnchor="middle" fontSize="4.6" textLength="21" lengthAdjust="spacingAndGlyphs" fill="#24292c" className="font-['Liberation_Serif',serif]">REALESTATE</text>
      <path d="M3.5 43 H26.5" stroke="#666" strokeWidth=".6" strokeDasharray="1.4 .5" />
    </svg>
  );
}

export default function App() {
  return (
    <div className="h-[1335px] w-[1770px] overflow-hidden border-r border-[#a6a6a6] bg-white font-['Lato','Noto_Sans_CJK_SC',sans-serif]">
      <div className="flex h-[60px] w-[1769px] items-center bg-[#2f4056] text-white">
        <p className="flex items-center pl-[22px] text-[16.8px] leading-[24px]">
          <span className="mt-[4px] w-[230px] whitespace-nowrap">欢迎访问Hotel.com。继续访问</span>
          <b className="mt-[4px] w-[88px] whitespace-nowrap">项目仓库：</b>
          <a className="whitespace-nowrap text-[21.37px] underline underline-offset-[3px]">gitee.com/ynwynw/hotelSystem-public</a>
        </p>
        <button className="ml-auto mr-[212px] mt-[8px] flex h-[36px] w-[125px] items-center rounded-[2px] border border-[#c9c9c9] pl-[12px] text-[14.3px] font-light text-[#666]">
          管理员入口
          <svg viewBox="0 0 10 16" className="ml-[10px] h-[16px] w-[10px]" fill="none" stroke="#777" strokeWidth="1.3">
            <path d="M1.5 1 L8.5 8 L1.5 15" />
          </svg>
        </button>
      </div>
      <header className="flex h-[84px] items-start border-b border-[#cacaca]">
        <div className="ml-[125px] mt-[17px]"><TowerLogo /></div>
        <a className="ml-[54px] mt-[24px] flex h-[36px] items-center text-[24.3px] font-light text-[#2f4056]">
          <svg viewBox="0 0 15 22" className="mr-[10px] h-[22px] w-[15px]" fill="none" stroke="#2f4056" strokeWidth="4.6">
            <path d="M13 2 L4 11 L13 20" />
          </svg>
          返回
        </a>
        <nav className="ml-auto mr-[131px] flex items-start text-[17px] font-light text-[#4281c6]">
          <a className="mt-[29px] w-[57px] leading-[26px]">首页</a>
          <span className="mt-[29px] w-[175px] whitespace-nowrap text-[22px] leading-[26px] text-black">欢迎你，yz用户</span>
          <a className="mt-[29px] w-[91px] leading-[26px]">我的订单</a>
          <a className="mt-[29px] flex w-[106px] items-center leading-[26px]">
            个人信息
            <svg viewBox="0 0 16 17" className="-ml-[1px] h-[17px] w-[16px]" fill="#4281c6">
              <circle cx="8" cy="4.4" r="4.4" />
              <path d="M0.5 17 V13 C.5 10 3 8.6 5 8.8 C7 10 9 10 11 8.8 C13 8.6 15.5 10 15.5 13 V17Z" />
            </svg>
          </a>
          <button className="h-[60px] w-[96px] rounded-[12px] bg-[#1e9fff] text-[17px] text-white">登出</button>
        </nav>
      </header>
      <main className="relative ml-[144px] mt-[6px] h-[612px] w-[1560px] overflow-hidden">
        <MapCanvas />
        <div className="absolute right-[12px] top-[12px] flex h-[25px] w-[134px] rounded-[3px] border border-[#8ba4dc] bg-white text-center text-[14px] leading-[23px] text-black shadow-[2px_2px_3px_rgba(0,0,0,0.35)]">
          <div className="w-[45px] bg-[#8ea8e0] font-bold text-white">地图</div>
          <div className="w-[44px] border-r border-[#8ba4dc]">卫星</div>
          <div className="w-[43px]">三维</div>
        </div>
        <div className="absolute bottom-[26px] left-[1px]"><BaiduLogo /></div>
        <div className="absolute bottom-[5px] left-0 h-[16px] whitespace-nowrap bg-white/70 pl-[4px] pr-[2px] font-['Liberation_Sans','Noto_Sans_CJK_SC',sans-serif] text-[13.75px] leading-[18px] tracking-[0.4px] text-black">
          © 2022 Baidu - GS(2021)6026号 - 甲测资字11111342 - 京ICP证030173号 - Data © 百度智图
        </div>
      </main>
    </div>
  );
}
